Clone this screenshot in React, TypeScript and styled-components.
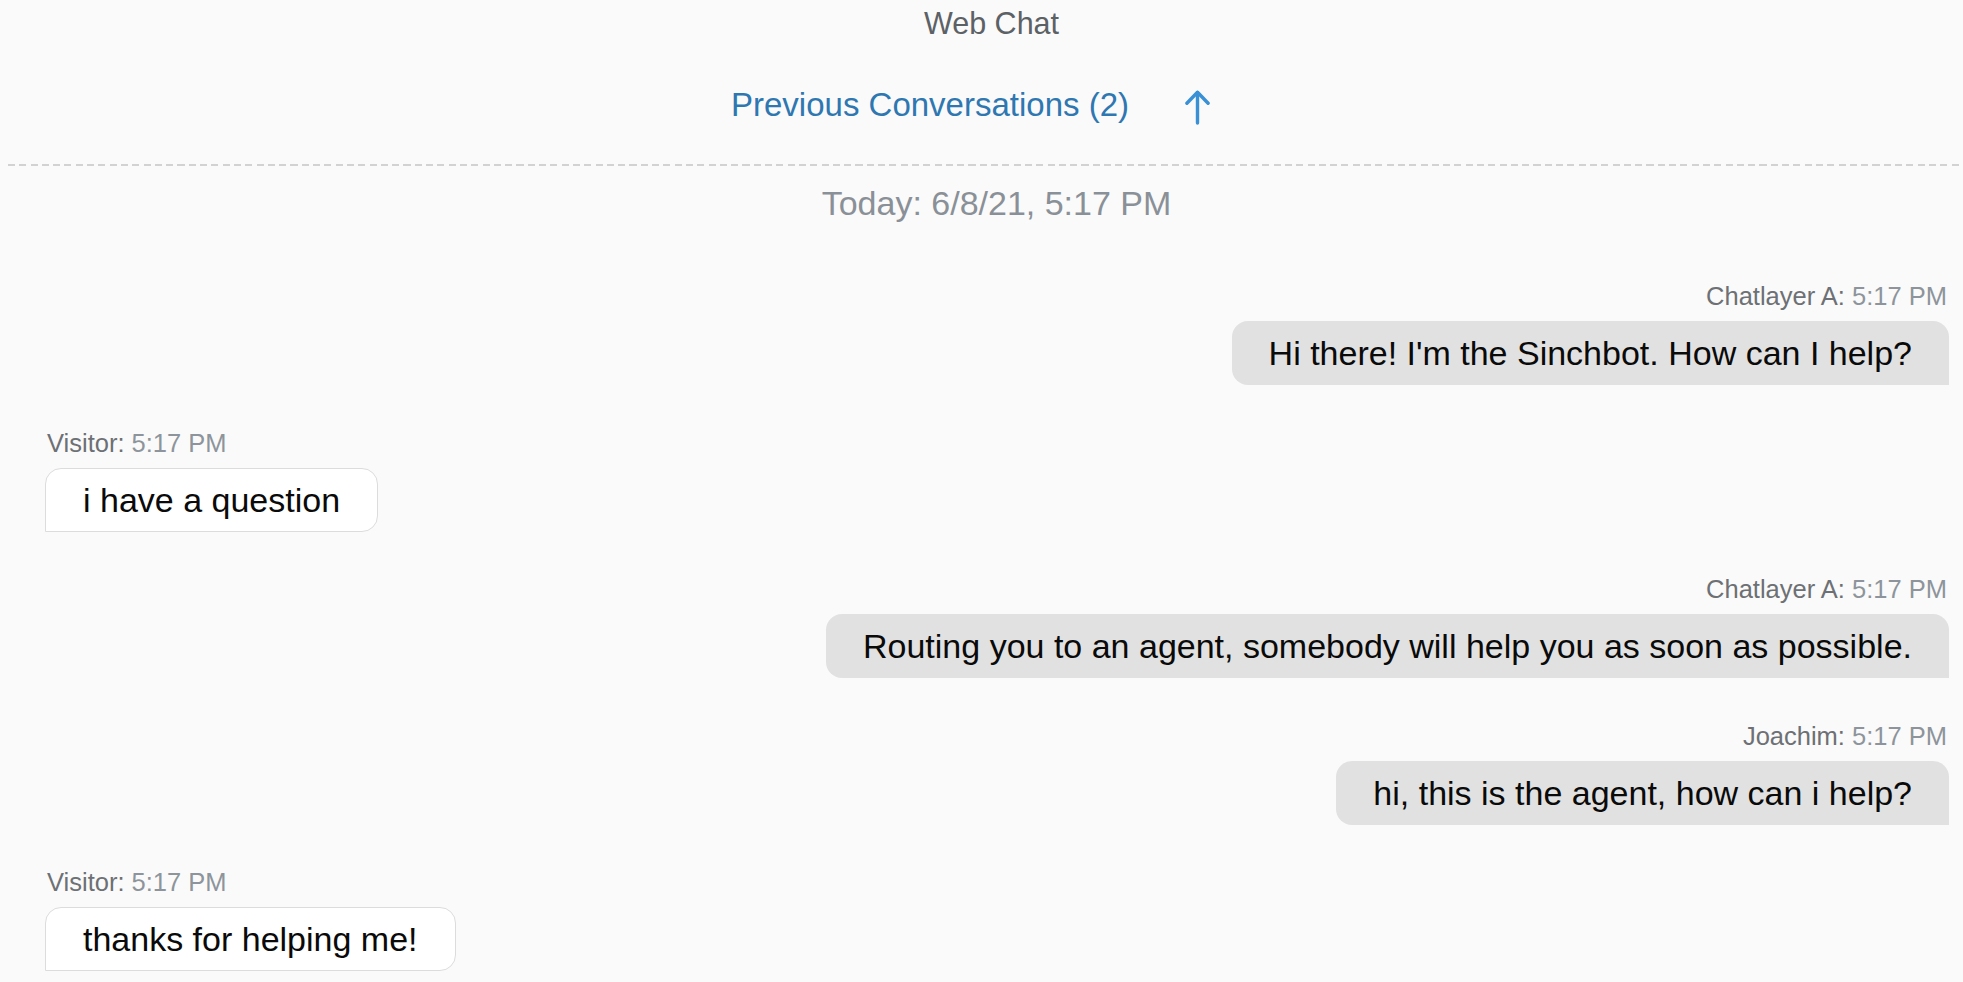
import React from "react";
import styled, { createGlobalStyle } from "styled-components";

const GlobalStyle = createGlobalStyle`
  html, body {
    margin: 0;
    padding: 0;
    background: #fafafa;
  }
  body {
    font-family: "Liberation Sans", Arial, sans-serif;
    -webkit-font-smoothing: antialiased;
  }
`;

const Page = styled.div`
  min-height: 982px;
  background: #fafafa;
  display: flex;
  flex-direction: column;
  overflow: hidden;
`;

const Header = styled.header`
  display: flex;
  flex-direction: column;
  align-items: center;
  padding-top: 5px;
`;

const Title = styled.h1`
  margin: 0;
  padding-left: 20px;
  font-size: 30.5px;
  line-height: 36px;
  font-weight: 400;
  color: #5c6166;
`;

const PrevRow = styled.div`
  display: flex;
  align-items: center;
  gap: 56px;
  margin-top: 44px;
  padding-right: 22px;
`;

const PrevLink = styled.a`
  font-size: 33px;
  line-height: 40px;
  color: #2e77b1;
  text-decoration: none;
  cursor: pointer;
`;

const ArrowIcon = styled.svg`
  width: 25px;
  height: 35px;
  margin-top: 5px;
  color: #3990d4;
`;

const Divider = styled.hr`
  margin: 39px 0 0 8px;
  border: 0;
  height: 2px;
  background-image: repeating-linear-gradient(
    to right,
    #d2d2d2 0,
    #d2d2d2 7px,
    transparent 7px,
    transparent 11.3px
  );
`;

const DateLabel = styled.div`
  margin-top: 17px;
  padding-left: 30px;
  text-align: center;
  font-size: 34px;
  line-height: 40px;
  color: #8a9097;
`;

const MessageList = styled.div`
  display: flex;
  flex-direction: column;
  gap: 42.5px;
  padding: 58px 14px 0 45px;
`;

type Side = "agent" | "visitor";

const MessageGroup = styled.div<{ $side: Side }>`
  display: flex;
  flex-direction: column;
  align-items: ${(p) => (p.$side === "agent" ? "flex-end" : "flex-start")};
  gap: 10px;
`;

const Meta = styled.div`
  font-size: 25.5px;
  line-height: 30px;
  padding: 0 2px;
  color: #6d7074;
`;

const Time = styled.span`
  color: #8d949b;
`;

const Bubble = styled.div<{ $side: Side }>`
  box-sizing: border-box;
  font-size: 34px;
  line-height: 40px;
  color: #0a0a0a;
  padding: ${(p) => (p.$side === "agent" ? "12px 37px" : "11px 37px")};
  background: ${(p) => (p.$side === "agent" ? "#e1e1e1" : "#ffffff")};
  border: ${(p) => (p.$side === "agent" ? "none" : "1px solid #dcdcdc")};
  border-radius: ${(p) =>
    p.$side === "agent" ? "16px 16px 0 16px" : "16px 16px 16px 0"};
  white-space: nowrap;
`;

const messages: { side: Side; name: string; time: string; text: string }[] = [
  { side: "agent", name: "Chatlayer A:", time: "5:17 PM", text: "Hi there! I'm the Sinchbot. How can I help?" },
  { side: "visitor", name: "Visitor:", time: "5:17 PM", text: "i have a question" },
  { side: "agent", name: "Chatlayer A:", time: "5:17 PM", text: "Routing you to an agent, somebody will help you as soon as possible." },
  { side: "agent", name: "Joachim:", time: "5:17 PM", text: "hi, this is the agent, how can i help?" },
  { side: "visitor", name: "Visitor:", time: "5:17 PM", text: "thanks for helping me!" },
];

export default function App() {
  return (
    <>
      <GlobalStyle />
      <Page>
        <Header>
          <Title>Web Chat</Title>
          <PrevRow>
            <PrevLink>Previous Conversations (2)</PrevLink>
            <ArrowIcon viewBox="0 0 25 35" fill="none" stroke="currentColor" strokeWidth={3.4} strokeLinecap="round" strokeLinejoin="round">
              <path d="M12.5 2.5 V33" />
              <path d="M1.9 13.3 L12.5 2.3 L23.1 13.3" />
            </ArrowIcon>
          </PrevRow>
        </Header>
        <Divider />
        <DateLabel>Today: 6/8/21, 5:17 PM</DateLabel>
        <MessageList>
          {messages.map((m, i) => (
            <MessageGroup key={i} $side={m.side}>
              <Meta>
                {m.name} <Time>{m.time}</Time>
              </Meta>
              <Bubble $side={m.side}>{m.text}</Bubble>
            </MessageGroup>
          ))}
        </MessageList>
      </Page>
    </>
  );
}
